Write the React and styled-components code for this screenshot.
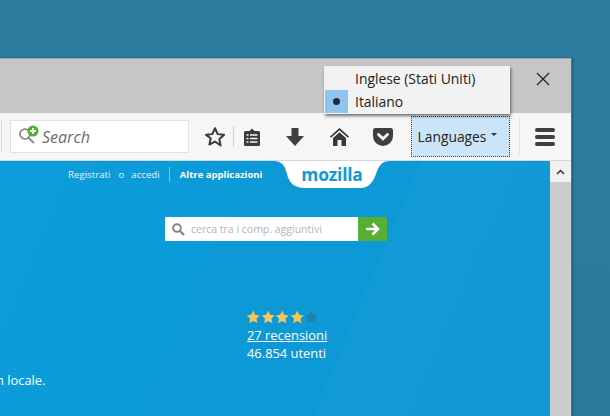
import React from "react";
import styled, { createGlobalStyle } from "styled-components";

const Global = createGlobalStyle`
  html, body { margin: 0; padding: 0; width: 610px; height: 416px; overflow: hidden; background: #2b7a9c; }
  #root { width: 610px; height: 416px; }
`;

const Desktop = styled.div`
  width: 610px; height: 416px; padding-top: 58px; box-sizing: border-box;
  background: linear-gradient(180deg, #2d7d9f 0%, #2b7a9b 100%);
  overflow: hidden;
`;
const Win = styled.div`
  position: relative;
  width: 572px; height: 358px; box-sizing: border-box;
  border-top: 1px solid #9ea3a6; border-right: 1px solid #5b6f7a;
  display: flex; flex-direction: column;
  box-shadow: 1px 0 2px rgba(20,50,70,.45);
`;
const TitleBar = styled.div`
  height: 54px; background: #c6c6c6; flex: none;
  display: flex; justify-content: flex-end; align-items: flex-start;
  padding: 9px 20px 0 0; box-sizing: border-box;
`;
const CloseBtn = styled.svg`width: 16px; height: 16px; display: block; margin-top: 3px;`;
const Toolbar = styled.div`
  height: 48px; flex: none; background: #f6f6f6; box-sizing: border-box;
  border-bottom: 1px solid #d4d8da;
  display: flex; align-items: center; padding-left: 1px;
`;
const SearchBox = styled.div`
  width: 179px; height: 33px; box-sizing: border-box; flex: none;
  background: #fff; border: 1px solid #e1e1e1;
  display: flex; align-items: center; gap: 2px; padding-left: 8px; margin: -1px 0 0 8px;
`;
const SearchWord = styled.span`
  font: italic 16px "Open Sans", sans-serif; color: #6d6d6d; position: relative; top: 1px;
`;
const Tool = styled.div`
  flex: none; width: ${p => p.$w || 24}px; margin-left: ${p => p.$ml || 0}px;
  display: flex; justify-content: center; align-items: center;
`;
const Sep = styled.div`
  flex: none; width: 1px; height: ${p => p.$h || 20}px; background: ${p => p.$c || "#cfcfcf"};
  margin-left: ${p => p.$ml}px; margin-top: ${p => p.$mt || 0}px;
`;
const LangButton = styled.div`
  flex: none; width: 99px; height: 41px; box-sizing: border-box; margin-left: 18px; margin-top: -1px;
  background: #cce4f7; border: 1px dotted #2c4a63; padding-right: 6px;
  display: flex; align-items: center; justify-content: center; gap: 5px;
  font: 13.8px "Open Sans", sans-serif; color: #222;
`;
const Caret = styled.span`
  width: 0; height: 0; border-left: 3px solid transparent; border-right: 3px solid transparent;
  border-top: 3px solid #333; margin-top: -3px;
`;
const Burger = styled.div`
  flex: none; margin-left: 15px; width: 20px; display: flex; flex-direction: column; gap: 3px;
`;
const BurgerBar = styled.span`
  display: block; height: 4px; border-radius: 2px; background: #3f3f3f;
`;
const Menu = styled.div`
  position: absolute; left: 324px; top: 7px; width: 186px; height: 48px; box-sizing: border-box;
  background: #f2f2f2; box-shadow: 1px 2px 3px rgba(0,0,0,.55); padding: 1px;
  display: flex; flex-direction: column;
`;
const MenuItem = styled.div`
  height: 23px; display: flex; align-items: center;
  font: 13.9px "Open Sans", sans-serif; color: #222;
`;
const Gutter = styled.div`
  width: 23px; height: 23px; margin-right: 7px; flex: none;
  display: flex; align-items: center; justify-content: center;
  background: ${p => (p.$on ? "#8ec4ef" : "transparent")};
`;
const Dot = styled.span`width: 7px; height: 7px; border-radius: 50%; background: #1f2b38;`;
const Content = styled.div`flex: 1; display: flex; min-height: 0;`;
const Page = styled.div`
  flex: 1; position: relative; overflow: hidden; min-width: 0;
  background:
    linear-gradient(113deg, rgba(255,255,255,0) 0 64%, rgba(255,255,255,.02) 64% 100%),
    linear-gradient(113deg, #0c9cda 0%, #0b9bd9 38%, #0d99d6 38.2%, #0c97d5 100%);
  color: #fff; font-family: "Open Sans", sans-serif;
`;
const TopNav = styled.div`
  display: flex; align-items: center; height: 27px; padding-left: 68px; font-size: 9.7px; color: #e2f3fb;
`;
const NavSpace = styled.span`margin-left: ${p => p.$ml}px;`;
const NavDivider = styled.span`width: 1px; height: 15px; background: #7cc9ec; margin: 0 10px 0 9px;`;
const NavStrong = styled.span`font-weight: 700; color: #fff; font-size: 9.5px;`;
const Tab = styled.div`
  position: absolute; left: 274px; top: 0; width: 116px; height: 27px;
  display: flex; justify-content: center; align-items: center;
`;
const TabShape = styled.svg`position: absolute; inset: 0; width: 116px; height: 27px;`;
const Logo = styled.span`
  position: relative; font: 700 17.4px "Open Sans", sans-serif; color: #0f9ad6; letter-spacing: -.2px; top: -1px;
`;
const AddonSearch = styled.div`
  display: flex; width: 222px; height: 24px; margin: 29px 0 0 165px;
`;
const AddonInput = styled.div`
  flex: 1; background: #fff; display: flex; align-items: center; gap: 6px; padding-left: 7px;
  font-size: 10.5px; color: #b3b3b3;
`;
const Go = styled.div`
  width: 29px; background: #56ae32; display: flex; align-items: center; justify-content: center;
`;
const Stats = styled.div`
  margin: 67px 0 0 247px; display: flex; flex-direction: column; font-size: 12.9px; line-height: 18px;
`;
const Stars = styled.div`display: flex; height: 18px; align-items: center; margin-left: -1px;`;
const Review = styled.span`text-decoration: underline; color: #fff;`;
const Locale = styled.div`font-size: 12.9px; margin: 9px 0 0 -4px; color: #fff; line-height: 18px;`;
const Scrollbar = styled.div`
  width: 21px; flex: none; background: #cdcdcd; display: flex; flex-direction: column;
`;
const ScrollUp = styled.div`
  height: 21px; background: #f1f1f1; display: flex; align-items: center; justify-content: center;
`;

const Star = ({ on }) => (
  <svg width="14.5" height="14" viewBox="0 0 24 24">
    <path d="M12 1l3.4 7.3 7.9 1-5.8 5.4 1.5 7.9L12 18.7l-7 3.9 1.5-7.9L.7 9.3l7.9-1z" fill={on ? "#f7c65b" : "#1d80b0"} />
  </svg>
);

export default function App() {
  return (
    <Desktop>
      <Global />
      <Win>
        <TitleBar>
          <CloseBtn viewBox="0 0 16 16"><path d="M2 2l12 12M14 2L2 14" stroke="#222" strokeWidth="1.2" fill="none" /></CloseBtn>
        </TitleBar>
        <Toolbar>
          <Sep $ml={0} $h={33} $c="#dcdcdc" $mt={-1} />
          <SearchBox>
            <svg width="21" height="22" viewBox="0 0 21 22">
              <circle cx="6" cy="9" r="5" fill="none" stroke="#7a7a7a" strokeWidth="1.6" />
              <path d="M9.500 13l5.500 5" stroke="#8f8f8f" strokeWidth="2.2" />
              <circle cx="14" cy="6" r="5.500" fill="#4fae2e" />
              <path d="M14 3v6M11 6h6" stroke="#fff" strokeWidth="1.8" />
            </svg>
            <SearchWord>Search</SearchWord>
          </SearchBox>
          <Tool $w={24} $ml={14}>
            <svg width="22" height="21" viewBox="0 0 24 23"><path d="M12 2.500l2.900 6.400 7 .8-5.200 4.700 1.400 6.900L12 17l-6.100 3.300 1.400-6.900L2.100 9.700l7-.8z" fill="none" stroke="#3a3a3a" strokeWidth="2.2" strokeLinejoin="round" /></svg>
          </Tool>
          <Sep $ml={6} $h={21} />
          <Tool $w={20} $ml={8}>
            <svg width="18" height="20" viewBox="0 0 18 20">
              <path d="M2.500 4H6.500L9 1.500 11.500 4H15.500A1.500 1.500 0 0 1 17 5.500V17.500A1.500 1.500 0 0 1 15.500 19H2.500A1.500 1.500 0 0 1 1 17.500V5.500A1.500 1.500 0 0 1 2.500 4Z" fill="#3a3a3a" />
              <path d="M3.500 8h2M3.500 11.500h2M3.500 15h2M7 8h7.500M7 11.500h7.500M7 15h7.500" stroke="#f6f6f6" strokeWidth="1.500" />
            </svg>
          </Tool>
          <Tool $w={20} $ml={23}>
            <svg width="18" height="18" viewBox="0 0 18 18"><path d="M5.500 0h7v8H18l-9 10L0 8h5.500z" fill="#3f3f3f" /></svg>
          </Tool>
          <Tool $w={20} $ml={24}>
            <svg width="19" height="18" viewBox="0 0 19 18"><path d="M9.500 0L19 8.500l-1 1.200-8.500-7.400L1 9.700 0 8.500z" fill="#333" /><path d="M3 10l6.500-5.700L16 10v8h-4.500v-6h-4v6H3z" fill="#3a3a3a" /></svg>
          </Tool>
          <Tool $w={20} $ml={24}>
            <svg width="20" height="18" viewBox="0 0 20 18"><path d="M2.500 0h15A2.500 2.500 0 0 1 20 2.500V8a10 10 0 0 1-20 0V2.500A2.500 2.500 0 0 1 2.500 0Z" fill="#3f3f3f" /><path d="M5.500 6.500L10 10.800l4.500-4.300" fill="none" stroke="#fff" strokeWidth="2.800" strokeLinecap="round" /></svg>
          </Tool>
          <LangButton>Languages<Caret /></LangButton>
          <Sep $ml={9} $h={36} $c="#e2e2e2" />
          <Burger><BurgerBar /><BurgerBar /><BurgerBar /></Burger>
        </Toolbar>
        <Content>
          <Page>
            <TopNav>
              <span>Registrati</span><NavSpace $ml={8}>o</NavSpace><NavSpace $ml={7}>accedi</NavSpace>
              <NavDivider />
              <NavStrong>Altre applicazioni</NavStrong>
            </TopNav>
            <Tab>
              <TabShape viewBox="0 0 116 27">
                <path d="M0 0C8 0 11 5 13 13 15 22 21 27 30 27H86C95 27 99 21 102 13 105 4 108 0 116 0Z" fill="#fff" />
              </TabShape>
              <Logo>mozilla</Logo>
            </Tab>
            <AddonSearch>
              <AddonInput>
                <svg width="13" height="13" viewBox="0 0 13 13"><circle cx="5" cy="5" r="3.800" fill="none" stroke="#888" strokeWidth="2" /><path d="M8 8l4 4" stroke="#888" strokeWidth="2.400" /></svg>
                cerca tra i comp. aggiuntivi
              </AddonInput>
              <Go>
                <svg width="15" height="14" viewBox="0 0 15 14"><path d="M1 7h11M7.500 1.500L13 7l-5.500 5.500" fill="none" stroke="#fff" strokeWidth="2.600" /></svg>
              </Go>
            </AddonSearch>
            <Stats>
              <Stars><Star on /><Star on /><Star on /><Star on /><Star /></Stars>
              <Review>27 recensioni</Review>
              <span>46.854 utenti</span>
            </Stats>
            <Locale>n locale.</Locale>
          </Page>
          <Scrollbar>
            <ScrollUp>
              <svg width="9" height="6" viewBox="0 0 9 6"><path d="M1 5l3.500-3.500L8 5" fill="none" stroke="#333" strokeWidth="1.500" /></svg>
            </ScrollUp>
          </Scrollbar>
        </Content>
        <Menu>
          <MenuItem><Gutter />Inglese (Stati Uniti)</MenuItem>
          <MenuItem><Gutter $on><Dot /></Gutter>Italiano</MenuItem>
        </Menu>
      </Win>
    </Desktop>
  );
}
